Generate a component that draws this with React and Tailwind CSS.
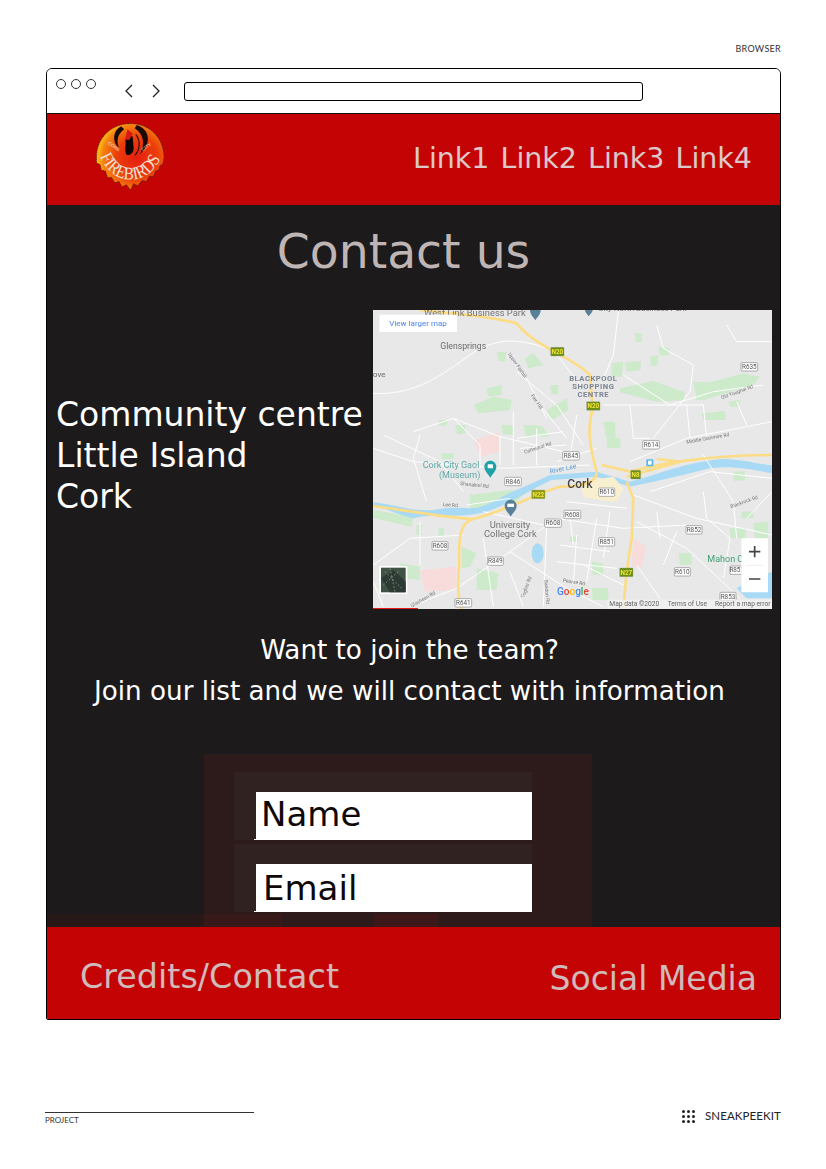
const dejavu = 'font-["DejaVu_Sans",sans-serif]';

function Logo() {
  return (
    <svg width="68" height="68" viewBox="2 3 65 65" className="block mb-[5px]">
      <defs>
        <radialGradient id="fire" cx="0.6" cy="0.52" r="0.62">
          <stop offset="0" stopColor="#e4200f" />
          <stop offset="0.5" stopColor="#ec3d0c" />
          <stop offset="0.82" stopColor="#f5830f" />
          <stop offset="1" stopColor="#fcd01f" />
        </radialGradient>
        <path id="firebirds-arc" d="M3 24 C10 68 60 68 68 24" fill="none" />
      </defs>
      <path
        d="M35 3.5 C53 3.5 67 17 67 36 L66 42 L63 44 L62 48 L59 49 L57 54 L53 54 L50 59 L46 58 L42 63 L38 61 L35 67 L31 62 L27 64 L24 59 L20 60 L17 55 L13 55 L11 49 L7 48 L6 43 L2.5 41 L2.5 36 C2.5 17 17 3.5 35 3.5 Z"
        fill="url(#fire)"
        stroke="#3a1a10"
        strokeWidth="0.6"
        strokeDasharray="1.5 0.6"
      />
      <path d="M26 6 C18 10 17 21 24 27 C21 20 23 13 29 9 Z" fill="#1a0b08" />
      <path d="M41 5 C53 9 56 22 44 33 C49 23 48 14 39 8 Z" fill="#1a0b08" />
      <path d="M33 14 L37 16 L38 27 C38 32 34 35 31 33 C29 29 31 23 30 19 Z" fill="#0c0505" />
      <path d="M32 9 L37 13 L34 19 L30 19 Z" fill="#d81812" />
      <path d="M40 14 C45 20 44 29 39 34" fill="none" stroke="#1a0b08" strokeWidth="1" />
      <circle cx="33" cy="2.5" r="1.2" fill="none" stroke="#3a1a10" strokeWidth="0.5" />
      <text fill="#efe3d8" fontFamily="Liberation Serif, serif" fontSize="17" textLength="76" lengthAdjust="spacingAndGlyphs">
        <textPath href="#firebirds-arc" startOffset="11">FIREBIRDS</textPath>
      </text>
      <text x="13" y="23" fill="#efe3d8" fontFamily="Liberation Sans, sans-serif" fontSize="4.5" transform="rotate(35 13 23)">CORK</text>
      <text x="47" y="30" fill="#efe3d8" fontFamily="Liberation Sans, sans-serif" fontSize="4.5" transform="rotate(-35 47 30)">CITY</text>
    </svg>
  );
}

function MapPicture() {
  const greens = [
    'M350 250 L395 240 L395 270 L355 275 Z',
    'M310 300 L370 275 L425 285 L420 315 L325 325 Z',
    'M530 315 L590 280 L595 315 L545 345 Z',
    'M465 160 L490 145 L520 180 L475 190 Z',
    'M725 175 L760 170 L755 215 L725 215 Z',
    'M765 172 L812 168 L812 195 L770 200 Z',
    'M840 155 L865 150 L862 182 L842 182 Z',
    'M865 125 L900 130 L895 152 L870 150 Z',
    'M795 85 L815 85 L815 112 L797 112 Z',
    'M380 140 L410 140 L405 170 L385 168 Z',
    'M700 350 L735 350 L737 398 L708 398 Z',
    'M710 400 L750 398 L752 428 L712 430 Z',
    'M750 250 L850 228 L945 262 L940 285 L860 290 L750 262 Z',
    'M970 230 L1020 232 L1120 205 L1170 215 L1150 240 L1000 285 L980 285 Z',
    'M995 325 L1065 318 L1068 345 L1000 345 Z',
    'M1075 290 L1110 285 L1105 305 L1080 305 Z',
    'M1090 500 L1125 498 L1125 525 L1092 528 Z',
    'M1080 670 L1128 670 L1125 700 L1082 700 Z',
    'M1150 655 L1195 650 L1195 700 L1155 700 Z',
    'M925 745 L965 745 L965 780 L930 780 Z',
    'M320 790 L385 805 L380 855 L320 855 Z',
    'M665 770 L700 775 L700 810 L668 810 Z',
    'M665 850 L715 850 L715 885 L668 885 Z',
    'M90 775 L150 785 L150 825 L95 820 Z',
    'M275 725 L320 745 L300 785 L275 790 Z',
    'M395 360 L430 362 L432 390 L398 388 Z',
    'M460 360 L515 362 L540 395 L465 392 Z',
    'M300 570 L420 555 L470 560 L440 590 L300 620 Z',
    'M10 615 L130 635 L125 665 L10 640 Z',
    'M255 360 L285 360 L288 385 L262 388 Z',
    'M540 240 L565 240 L565 268 L545 268 Z',
    'M205 345 L232 345 L230 362 L208 362 Z',
    'M215 445 L250 445 L250 462 L215 462 Z',
    'M600 695 L625 695 L625 710 L600 710 Z',
    'M140 660 L155 660 L155 690 L140 690 Z',
    'M205 670 L222 670 L222 692 L205 692 Z',
    'M1115 620 L1150 620 L1150 640 L1115 640 Z',
  ];
  const pinks = [
    'M312 405 L386 382 L388 440 L330 455 Z',
    'M150 795 L260 785 L255 855 L165 860 Z',
    'M790 700 L828 725 L815 790 L785 785 Z',
  ];
  const streets = [
    'M10 265 C120 270 190 230 300 150 C360 110 420 90 530 130',
    'M130 380 L250 340 L390 395 L580 440',
    'M10 430 L130 470 L400 490 L660 480',
    'M390 395 L390 480 M430 320 L430 480 M510 300 L590 400',
    'M410 150 L470 220 L530 340',
    'M745 20 L730 150 L700 220',
    'M860 60 L880 130 L970 180 L960 260 L850 400',
    'M1070 60 L1100 110 L1206 110',
    'M700 300 L780 300 L790 400 L840 400',
    'M780 470 L950 400 L1206 350',
    'M790 570 L980 640 L1206 690',
    'M800 650 L950 730 L1110 880',
    'M560 640 L760 670 L950 660',
    'M10 780 L120 700 L280 690',
    'M120 905 L260 850 L420 740 L560 640',
    'M530 660 L520 905 M620 690 L610 840 M680 640 L650 830',
    'M420 740 L590 850 L700 905',
    'M570 720 L720 740 M560 770 L740 790',
    'M150 390 L130 460 L170 590',
    'M1000 450 L1090 590 L1100 700',
    'M440 200 L560 300 L640 420 M560 150 L640 250',
    'M760 210 L900 300 L1030 260 L1180 240',
    'M780 300 L1000 300 L1010 400',
    'M950 300 L960 400 M1100 290 L1130 360',
    'M40 390 L210 470 L280 560 M250 340 L330 420 L330 490',
    'M440 400 L580 380 M450 430 L590 420 M500 370 L500 480',
    'M620 330 L600 460 M560 470 L680 430',
    'M840 560 L1020 500 L1206 520 M860 620 L870 700 M1000 560 L1010 640',
    'M290 600 L420 580 M340 620 L520 660 M150 650 L150 780',
    'M590 590 L770 610 M600 640 L610 720 M720 620 L700 760',
    'M800 780 L870 880 M640 780 L760 840 M920 680 L880 780',
    'M1010 640 L1080 700 L1060 820 M1206 560 L1130 640',
    'M10 830 L40 905 M340 700 L370 905 M420 800 L460 905',
  ];
  const shields = [
    [578, 440, 'R845', 50],
    [404, 517, 'R846', 50],
    [686, 549, 'R610', 48],
    [582, 616, 'R608', 50],
    [524, 642, 'R608', 50],
    [686, 698, 'R851', 48],
    [186, 710, 'R608', 48],
    [352, 756, 'R849', 48],
    [913, 788, 'R610', 48],
    [1080, 783, 'R852', 40],
    [1050, 862, 'R853', 48],
    [948, 662, 'R852', 48],
    [818, 407, 'R614', 50],
    [1113, 173, 'R635', 50],
    [255, 881, 'R641', 50],
  ];
  const motorways = [
    [542, 127, 'N20', '#6a8f14', 40],
    [650, 290, 'N20', '#6a8f14', 40],
    [485, 555, 'N22', '#8f9a10', 40],
    [782, 496, 'N8', '#6a8f14', 30],
    [749, 789, 'N27', '#6a8f14', 40],
  ];

  return (
    <svg viewBox="9 15 1197 897" className="block w-[399px] h-[299px] shrink-0 blur-[0.35px]">
      <rect x="9" y="15" width="1197" height="897" fill="#e8e8e8" />
      {greens.map((d, i) => <path key={i} d={d} fill="#cdeacb" />)}
      {pinks.map((d, i) => <path key={i} d={d} fill="#f8dcdc" />)}
      <path d="M10 592 C90 600 130 625 210 612 C290 600 300 625 370 590 C440 550 480 540 540 510 L680 500 L780 530 C860 510 950 470 1060 462 C1120 462 1170 480 1206 480 L1206 505 C1150 495 1090 480 1020 490 C940 510 860 530 780 545 L680 515 L545 525 C470 560 400 610 330 625 C250 640 190 625 130 640 C90 630 50 610 10 605 Z" fill="#a8daf5" />
      <ellipse cx="503" cy="745" rx="18" ry="30" fill="#a8daf5" />
      <path d="M1206 800 C1160 815 1130 830 1100 850 L1130 880 L1206 880 Z" fill="#a8daf5" />
      {streets.map((d, i) => <path key={i} d={d} fill="none" stroke="#ffffff" strokeWidth="3" />)}
      <path d="M630 530 L730 515 L760 550 L740 590 L690 585 L640 575 Z" fill="#f8efcf" />
      <g fill="none" stroke="#fcdc84" strokeWidth="8">
        <path d="M150 15 C230 25 350 30 440 55 C500 130 600 150 660 210 L668 310 C650 370 660 430 680 500 C680 530 640 545 570 545 C500 565 400 620 310 642 C240 640 100 615 9 603" />
        <path d="M310 642 C270 650 265 700 268 780 C260 840 265 880 275 912" />
        <path d="M695 480 L780 500 C850 480 1000 450 1206 450" />
        <path d="M770 515 L930 470 L860 462" />
        <path d="M770 530 L790 580 L785 700 L770 800 L760 912" />
      </g>
      <g fontFamily="Roboto, sans-serif">
        <text x="162" y="32" fontSize="28" fill="#757575">West Link Business Park</text>
        <path d="M480 15 L512 15 C512 30 500 38 496 46 C492 38 480 30 480 15 Z" fill="#5a7f99" />
        <path d="M645 15 L668 15 C668 22 660 28 656 34 C652 28 645 22 645 15 Z" fill="#5a7f99" />
        <text x="685" y="18" fontSize="24" fill="#757575">City North Business Park</text>
        <text x="211" y="131" fontSize="26" fill="#6b6b6b">Glensprings</text>
        <text x="9" y="217" fontSize="24" fill="#6b6b6b">ove</text>
        <g fontSize="23" fontWeight="700" fill="#7b8594" textAnchor="middle" letterSpacing="1.5">
          <text x="670" y="229">BLACKPOOL</text>
          <text x="670" y="253">SHOPPING</text>
          <text x="670" y="277">CENTRE</text>
        </g>
        <g fill="#5fa8a8" fontSize="27">
          <text x="158" y="490">Cork City Gaol</text>
          <text x="207" y="518">(Museum)</text>
        </g>
        <path d="M343 485 C343 475 351 467 361 467 C371 467 379 475 379 485 C379 497 367 507 361 518 C355 507 343 497 343 485 Z" fill="#20a0a8" />
        <rect x="353" y="478" width="16" height="12" rx="2" fill="#fff" />
        <text x="592" y="548" fontSize="36" fontWeight="500" fill="#444">Cork</text>
        <text x="541" y="506" fontSize="20" fill="#5b9bd5" transform="rotate(-12 541 506)">River Lee</text>
        <path d="M404 603 C404 592 412 584 422 584 C432 584 440 592 440 603 C440 615 428 624 422 635 C416 624 404 615 404 603 Z" fill="#5a7f99" />
        <rect x="412" y="596" width="20" height="10" fill="#fff" />
        <g fontSize="28" fill="#757575" textAnchor="middle">
          <text x="420" y="668">University</text>
          <text x="421" y="696">College Cork</text>
        </g>
        <text x="1012" y="770" fontSize="27" fill="#3f9f74">Mahon Ci</text>
        <g fontSize="15" fill="#777">
          <text x="464" y="446" transform="rotate(-18 464 446)">Cathedral Rd</text>
          <text x="270" y="540" transform="rotate(6 270 540)">Shanakiel Rd</text>
          <text x="218" y="603" transform="rotate(4 218 603)">Lee Rd</text>
          <text x="950" y="416" transform="rotate(-10 950 416)">Middle Glanmire Rd</text>
          <text x="1055" y="283" transform="rotate(-20 1055 283)">Old Youghal Rd</text>
          <text x="1083" y="610" transform="rotate(-20 1083 610)">Blackrock Rd</text>
          <text x="413" y="148" transform="rotate(55 413 148)">Upper Fairhill</text>
          <text x="482" y="272" transform="rotate(55 482 272)">Fair Hill</text>
          <text x="578" y="830" transform="rotate(10 578 830)">Pearse Rd</text>
          <text x="125" y="908" transform="rotate(-30 125 908)">Glasheen Rd</text>
          <text x="523" y="825" transform="rotate(85 523 825)">Bandon Rd</text>
          <text x="462" y="880" transform="rotate(-70 462 880)">Togher Rd</text>
        </g>
        {shields.map(([x, y, label, w]) => (
          <g key={`${x}-${y}`}>
            <rect x={x} y={y} width={w} height="25" rx="3" fill="#fff" stroke="#8a8a8a" strokeWidth="2" />
            <text x={x + w / 2} y={y + 19} fontSize="19" fill="#555" textAnchor="middle">{label}</text>
          </g>
        ))}
        {motorways.map(([x, y, label, color, w]) => (
          <g key={`${x}-${y}`}>
            <rect x={x} y={y} width={w} height="26" rx="2" fill={color} stroke="#9a9a9a" strokeWidth="1" />
            <text x={x + w / 2} y={y + 20} fontSize="19" fontWeight="700" fill="#f2e33a" textAnchor="middle">{label}</text>
          </g>
        ))}
        <rect x="829" y="463" width="21" height="21" rx="3" fill="#58b6ef" />
        <rect x="834" y="467" width="11" height="12" fill="#fff" />
        <text x="561" y="870" fontSize="30" fontWeight="500">
          <tspan fill="#4285f4">G</tspan>
          <tspan fill="#ea4335">o</tspan>
          <tspan fill="#fbbc05">o</tspan>
          <tspan fill="#4285f4">g</tspan>
          <tspan fill="#34a853">l</tspan>
          <tspan fill="#ea4335">e</tspan>
        </text>
        <rect x="712" y="884" width="494" height="28" fill="#f3f3f3" fillOpacity="0.75" />
        <g fontSize="20" fill="#666">
          <text x="718" y="903">Map data ©2020</text>
          <text x="893" y="903">Terms of Use</text>
          <text x="1035" y="903">Report a map error</text>
        </g>
        <rect x="28" y="29" width="233" height="52" rx="3" fill="#fff" />
        <text x="58" y="62" fontSize="24" fill="#4a85ee">View larger map</text>
      </g>
      <rect x="28" y="783" width="84" height="84" rx="3" fill="#fff" />
      <rect x="33" y="788" width="74" height="74" fill="#3f5244" />
      <path d="M33 820 L70 795 L107 830 L107 862 L60 862 Z" fill="#2d3a33" />
      <path d="M45 800 L95 850 M40 840 L85 800 M60 790 L75 860" stroke="#7f8c80" strokeWidth="3" strokeDasharray="5 6" fill="none" />
      <rect x="1114" y="700" width="80" height="162" rx="3" fill="#fff" />
      <path d="M1129 781 L1179 781" stroke="#e6e6e6" strokeWidth="2" />
      <path d="M1154 723 L1154 757 M1137 740 L1171 740 M1137 822 L1171 822" stroke="#444" strokeWidth="5" />
      <rect x="9" y="909" width="135" height="3" fill="#e61a1a" />
    </svg>
  );
}

function FormField({ label, textClass }) {
  return (
    <div className="relative h-[68px] bg-[#312222] flex items-end pl-[22px]">
      <div className={`relative w-full h-[48px] bg-white text-[#0e0808] text-[34px] ${dejavu} ${textClass}`}>
        {label}
        <span className="absolute left-[-2px] bottom-0 w-[2px] h-px bg-white" />
      </div>
    </div>
  );
}

export default function App() {
  return (
    <div className="w-[826px] h-[1169px] bg-white overflow-hidden flex flex-col font-['Lato',sans-serif]">
      <div className="h-[68px] pt-[43px] pr-[45px] text-right text-[9px] leading-[12px] tracking-[0.3px] text-[#333]">BROWSER</div>

      <div className="ml-[46px] w-[735px] h-[952px] shrink-0 border border-black rounded-t-[6px] rounded-b-[2px] overflow-hidden flex flex-col">
        <div className="h-[45px] shrink-0 bg-white border-b border-[#111] flex items-start">
          <div className="flex gap-[5px] ml-[9px] mt-[10px]">
            <span className="w-[10px] h-[10px] rounded-full border border-[#333]" />
            <span className="w-[10px] h-[10px] rounded-full border border-[#333]" />
            <span className="w-[10px] h-[10px] rounded-full border border-[#333]" />
          </div>
          <div className="flex gap-[17px] ml-[28px] mt-[15px]">
            <svg width="10" height="14" viewBox="0 0 10 14" fill="none" stroke="#222" strokeWidth="1.3">
              <path d="M8 1 L2 7 L8 13" />
            </svg>
            <svg width="10" height="14" viewBox="0 0 10 14" fill="none" stroke="#222" strokeWidth="1.3">
              <path d="M2 1 L8 7 L2 13" />
            </svg>
          </div>
          <div className="ml-[23px] mt-[13px] w-[459px] h-[19px] bg-white border border-black rounded-[3px]" />
        </div>

        <header className="h-[91px] shrink-0 bg-[#c40404] flex items-center justify-between pl-[49px] pr-[28px]">
          <Logo />
          <nav className={`flex gap-[11px] text-[28.5px] text-[#dcc8c8] ${dejavu}`}>
            <span>Link1</span>
            <span>Link2</span>
            <span>Link3</span>
            <span>Link4</span>
          </nav>
        </header>

        <main className={`relative flex-1 min-h-0 bg-[#1c1a1a] overflow-hidden ${dejavu}`}>
          <h1 className="pt-[17px] pr-[20px] text-center text-[47.25px] leading-[60px] text-[#bfb5b5]">Contact us</h1>

          <div className="mt-[28px] flex items-center pl-[9px] pr-[8px] justify-between">
            <p className="mb-[8px] text-[33px] leading-[41px] text-white">
              Community centre<br />Little Island<br />Cork
            </p>
            <MapPicture />
          </div>

          <div className="mt-[21px] pr-[8px] text-center text-white text-[26.2px] leading-[41px]">
            <p>Want to join the team?</p>
            <p>Join our list and we will contact with information</p>
          </div>

          <form className="relative mt-[42px] ml-[157px] w-[388px] h-[173px] bg-[#2c1b1a] pt-[18px] pl-[30px] pr-[60px] flex flex-col gap-[4px]">
            <FormField label="Name" textClass="pl-[5px] leading-[44px]" />
            <FormField label="Email" textClass="pl-[7px] leading-[48px]" />
          </form>

          <div className="absolute left-0 bottom-0 h-[13px] w-[235px] bg-[#c40404]/[0.07]" />
          <div className="absolute left-[327px] bottom-0 h-[13px] w-[64px] bg-[#3d1818]" />
        </main>

        <footer className={`h-[92px] shrink-0 bg-[#c40404] flex justify-between pl-[33px] pr-[23px] text-[#d0baba] ${dejavu}`}>
          <span className="text-[33.4px] leading-[40px] mt-[30px]">Credits/Contact</span>
          <span className="text-[33px] leading-[40px] mt-[32px]">Social Media</span>
        </footer>
      </div>

      <div className="mt-[92px] pl-[45px] pr-[45px] flex justify-between items-start">
        <div className="w-[209px] border-t border-[#333] pt-[2px] text-[8px] leading-[10px] text-[#333]">PROJECT</div>
        <div className="flex items-center gap-[10px] -mt-[3px]">
          <div className="grid grid-cols-3 gap-[2px]">
            {Array.from({ length: 9 }).map((_, i) => (
              <span key={i} className="w-[3px] h-[3px] rounded-full bg-[#222]" />
            ))}
          </div>
          <span className="text-[11.5px] leading-[14px] tracking-[0.1px] text-[#222]">SNEAKPEEKIT</span>
        </div>
      </div>
    </div>
  );
}
